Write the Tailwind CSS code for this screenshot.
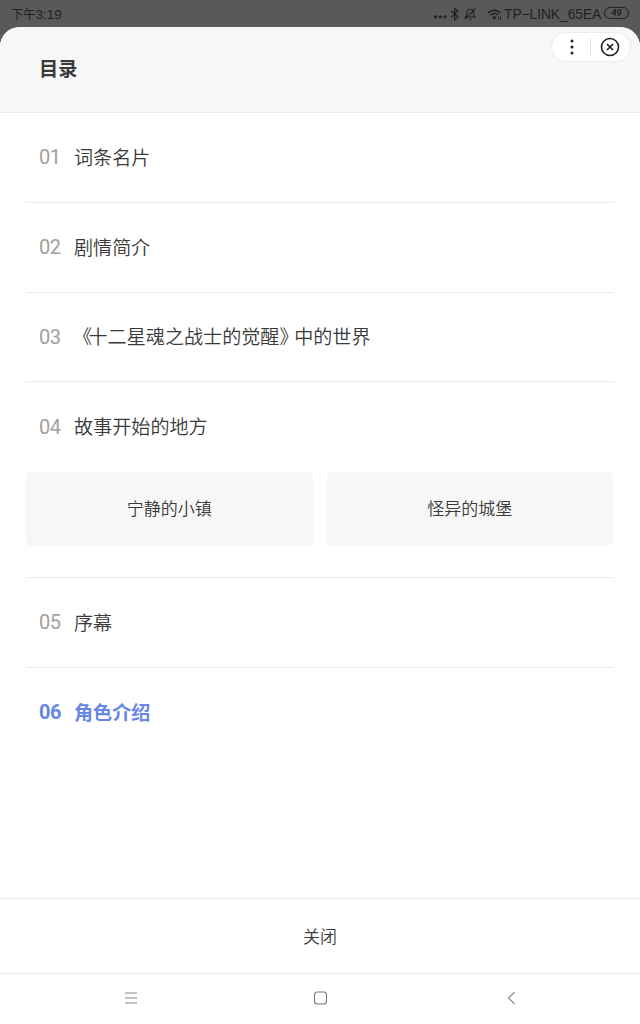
<!DOCTYPE html>
<html lang="zh-CN">
<head>
<meta charset="utf-8">
<title>目录</title>
<script src="https://cdn.jsdelivr.net/npm/@tailwindcss/browser@4"></script>
</head>
<body class="flex h-screen w-[640px] flex-col overflow-hidden bg-[#595959] font-['Roboto','Noto_Sans_CJK_SC',sans-serif] text-[#3a3a3a]">
  <div class="flex h-[27px] shrink-0 items-center justify-between pr-[11px] pl-[11px] text-[#222]">
    <span class="flex items-center pt-[2px] font-['Liberation_Sans','Noto_Sans_CJK_SC',sans-serif] leading-5 whitespace-nowrap"><span class="text-[12.300px]">下午</span><span class="text-[13.600px] tracking-[-0.1px]">3:19</span></span>
    <div class="flex items-center">
      <svg class="h-5 w-[71px]" viewBox="433 3.500 71 20" fill="none" stroke="#222" stroke-width="1.2">
        <g fill="#222" stroke="none"><circle cx="435.6" cy="16.300" r="1.6"/><circle cx="440.3" cy="16.300" r="1.6"/><circle cx="445" cy="16.300" r="1.6"/></g>
        <path d="M451.300 10.300l6.700 6-3.300 2.800V8l3.300 2.800-6.700 6"/>
        <path d="M465.500 16.500c1.200-1 1.400-2.200 1.400-4 0-2.400 1.300-3.700 3.300-3.700s3.300 1.300 3.300 3.700c0 1.800.2 3 1.400 4zM468.700 18.700h3.200M465 18.500L475.500 8" stroke-width="1.100"/>
        <path d="M488 12.300c3.500-3.200 9-3.200 12.500 0M490.400 14.700c2.300-2 5.500-2 7.800 0" stroke-width="1.600"/>
        <path d="M491.900 16.600q2.400-1.800 4.800 0l-2.400 2.800z" fill="#222" stroke="none"/>
        <path d="M498.600 19.500v-3.500M500.500 16v3.500" stroke-width=".8"/>
      </svg>
      <span class="w-[100px] pt-[2px] font-['Liberation_Sans',sans-serif] text-[13.800px] leading-5 tracking-[-0.05px] whitespace-nowrap">TP−LINK_65EA</span>
      <span class="mb-px flex h-[12px] w-[25px] items-center justify-center rounded-full border border-[#222] text-[9.500px] leading-none font-bold italic">49</span>
    </div>
  </div>

  <main class="relative flex min-h-0 flex-1 flex-col overflow-hidden rounded-t-[20px] bg-white">
    <header class="flex h-[86px] shrink-0 items-center border-b border-[#ebebeb] bg-[#f7f7f7] pl-[39px]">
      <h1 class="pt-px text-[19.200px] leading-7 font-bold">目录</h1>
    </header>
    <div class="absolute top-[5px] right-[9px] flex h-[30px] w-[80px] items-center rounded-full border border-[#ebebeb] bg-white">
      <svg class="h-[28px] w-[78px]" viewBox="0 0 78 28" fill="none" stroke="#222">
        <g fill="#222" stroke="none"><circle cx="20" cy="8" r="1.500"/><circle cx="20" cy="14" r="1.500"/><circle cx="20" cy="20" r="1.500"/></g>
        <path d="M38.500 5.500v17" stroke="#e4e4e4"/>
        <circle cx="58" cy="14" r="8.500" stroke-width="1.600"/>
        <path d="M55 11l6 6M61 11l-6 6" stroke-width="1.700"/>
      </svg>
    </div>

    <ol class="mx-[26px] flex-1 text-[19.100px] leading-7 font-[350]">
      <li class="flex h-[90px] items-center border-b border-[#ebebeb] pl-[13px]"><span class="w-[35px] pb-px text-[20px] font-normal tracking-[-0.5px] text-[#a0a0a0]">01</span><span class="pt-[2px]">词条名片</span></li>
      <li class="flex h-[90px] items-center border-b border-[#ebebeb] pl-[13px]"><span class="w-[35px] pb-px text-[20px] font-normal tracking-[-0.5px] text-[#a0a0a0]">02</span><span class="pt-[2px]">剧情简介</span></li>
      <li class="flex h-[89px] items-center border-b border-[#ebebeb] pl-[13px]"><span class="w-[35px] text-[20px] font-normal tracking-[-0.5px] text-[#a0a0a0]">03</span><span class="-ml-px pt-[2px] whitespace-nowrap"><span class="tracking-[-3.600px]">《</span>十二星魂之战士的觉醒<span class="tracking-[-4.400px]">》</span>中的世界</span></li>
      <li class="h-[196px] border-b border-[#ebebeb]">
        <div class="flex h-[90px] items-center pl-[13px]"><span class="w-[35px] pb-px text-[20px] font-normal tracking-[-0.5px] text-[#a0a0a0]">04</span><span class="pt-[2px]">故事开始的地方</span></div>
        <div class="grid grid-cols-2 gap-[14px] pr-px text-[17px]">
          <div class="flex h-[74px] items-center justify-center rounded-[5px] bg-[#f7f7f7]">宁静的小镇</div>
          <div class="flex h-[74px] items-center justify-center rounded-[5px] bg-[#f7f7f7]">怪异的城堡</div>
        </div>
      </li>
      <li class="flex h-[90px] items-center border-b border-[#ebebeb] pl-[13px]"><span class="w-[35px] pb-px text-[20px] font-normal tracking-[-0.5px] text-[#a0a0a0]">05</span><span class="pt-[2px]">序幕</span></li>
      <li class="flex h-[90px] items-center pl-[13px] font-bold text-[#6886e5]"><span class="w-[35px] pb-[2px] text-[20px] tracking-[-0.5px]">06</span><span class="pt-[2px]">角色介绍</span></li>
    </ol>

    <button class="flex h-[75px] shrink-0 items-center justify-center border-t border-[#ebebeb] pt-[3px] text-[17px] font-[350]">关闭</button>
    <nav class="flex h-[51px] shrink-0 items-center justify-between border-t border-[#e8e8e8] px-[121px] pb-[2px]">
      <svg class="h-5 w-5" viewBox="0 0 20 20" stroke="#888" stroke-width="1.200"><path d="M4 5h12M4 10h12M4 15h12"/></svg>
      <svg class="h-5 w-5" viewBox="0 0 20 20" fill="none" stroke="#777" stroke-width="1.100"><rect x="4.500" y="4" width="12" height="12" rx="3"/></svg>
      <svg class="h-5 w-5" viewBox="0 0 20 20" fill="none" stroke="#888" stroke-width="1.200"><path d="M15.500 4.300L9.500 10l6 5.700"/></svg>
    </nav>
  </main>
</body>
</html>
